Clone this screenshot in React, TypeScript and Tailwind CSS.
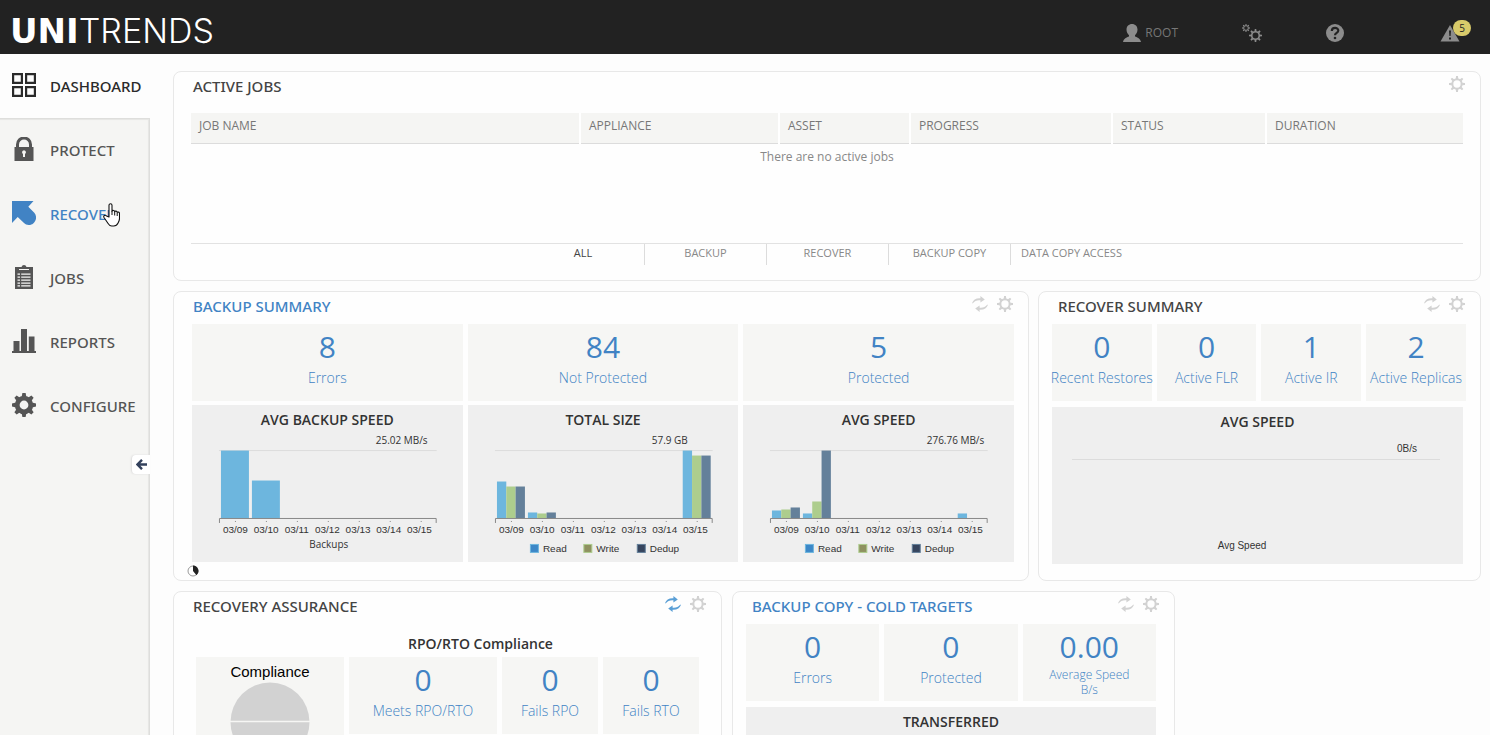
import { useState } from 'react';
import type { ReactNode } from 'react';

interface StatProps {
  value: string;
  label: string;
  unit?: string;
}

interface Series {
  name: string;
  color: string;
  keyColor: string;
  values: number[];
}

interface BarChartProps {
  title: string;
  peak: string;
  series: Series[];
  caption?: string;
}

interface PanelProps {
  title: string;
  linked?: boolean;
  refresh?: 'idle' | 'busy';
  className?: string;
  children: ReactNode;
}

const DAYS = ['03/09', '03/10', '03/11', '03/12', '03/13', '03/14', '03/15'];
const TEETH = [0, 45, 90, 135, 180, 225, 270, 315];

const JOB_COLUMNS = [
  { name: 'Job Name', width: 'w-auto' },
  { name: 'Appliance', width: 'w-[199px]' },
  { name: 'Asset', width: 'w-[131px]' },
  { name: 'Progress', width: 'w-[202px]' },
  { name: 'Status', width: 'w-[154px]' },
  { name: 'Duration', width: 'w-[197px]' },
];

const JOB_FILTERS = ['All', 'Backup', 'Recover', 'Backup Copy', 'Data Copy Access'];

const BACKUP_SPEED: Series[] = [
  { name: 'Backups', color: '#6db6de', keyColor: '#3c87c7', values: [68, 38, 0, 0, 0, 0, 0] },
];

const TOTAL_SIZE: Series[] = [
  { name: 'Read', color: '#6db6de', keyColor: '#3c87c7', values: [37, 6, 0, 0, 0, 0, 68] },
  { name: 'Write', color: '#adcd8d', keyColor: '#8e9160', values: [32, 5, 0, 0, 0, 0, 63] },
  { name: 'Dedup', color: '#64809a', keyColor: '#36455e', values: [32, 6, 0, 0, 0, 0, 63] },
];

const AVG_SPEED: Series[] = [
  { name: 'Read', color: '#6db6de', keyColor: '#3c87c7', values: [8, 5, 0, 0, 0, 0, 5] },
  { name: 'Write', color: '#adcd8d', keyColor: '#8e9160', values: [9, 17, 0, 0, 0, 0, 0] },
  { name: 'Dedup', color: '#64809a', keyColor: '#36455e', values: [11, 68, 0, 0, 0, 0, 0] },
];

function GearIcon({ className, bold = false }: { className: string; bold?: boolean }) {
  return (
    <svg viewBox="0 0 24 24" className={className} aria-hidden="true">
      <circle cx="12" cy="12" r={bold ? 6.8 : 7} fill="none" stroke="currentColor" strokeWidth={bold ? 4.8 : 3} />
      {TEETH.map((angle) => (
        <path
          key={angle}
          d={bold ? 'M9.6 4 10.4 0h3.2l.8 4z' : 'M10 4.4 10.600 0h2.800l.6 4.4z'}
          fill="currentColor"
          transform={`rotate(${angle} 12 12)`}
        />
      ))}
    </svg>
  );
}

function RefreshIcon({ className }: { className: string }) {
  return (
    <svg viewBox="0 0 16 16" className={className} aria-hidden="true" fill="currentColor">
      <path d="M0 7.2C1 3.9 4.2 1.9 8.4 2.2V0l4.400 3.500-4.400 3V4.300C5 4 2.600 4.900.9 7.300z" />
      <path d="M16 8.800c-1 3.300-4.200 5.300-8.400 5V16l-4.400-3.500 4.400-3v2.200c3.400.3 5.800-.6 7.500-3z" />
    </svg>
  );
}

function DashboardIcon() {
  return (
    <svg viewBox="0 0 24 24" className="size-6" fill="none" stroke="currentColor" strokeWidth="2.2" aria-hidden="true">
      <path d="M1.100 1.100h8.800v8.800H1.100zM14.100 1.100h8.800v8.800h-8.800zM1.100 14.100h8.800v8.800H1.100zM14.100 14.100h8.800v8.800h-8.800z" />
    </svg>
  );
}

function LockIcon() {
  return (
    <svg viewBox="0 0 24 24" className="size-6" fill="currentColor" aria-hidden="true">
      <path d="M5.500 11V7.500a6.500 6.500 0 0 1 13 0V11" fill="none" stroke="currentColor" strokeWidth="3" />
      <path
        fillRule="evenodd"
        d="M2.500 10h19v14h-19zM12 13.200a2 2 0 0 0-1 3.700V20h2v-3.100a2 2 0 0 0-1-3.700z"
      />
    </svg>
  );
}

function RecoverIcon() {
  return (
    <svg viewBox="0 0 24 24" className="size-6" fill="currentColor" aria-hidden="true">
      <path d="M0 0h21.500l-5.200 5.700 6 6.100c3.200 3.800 1.600 8.400-1.100 10.700-3 2.400-7 1.700-9.200-.5l-6.300-5.900L0 22z" />
    </svg>
  );
}

function JobsIcon() {
  return (
    <svg viewBox="0 0 24 24" className="size-6" aria-hidden="true">
      <path d="M3 2h4v3h10V2h4v22H3z" fill="currentColor" />
      <path d="M7 4V2h2.500a2.600 2.600 0 0 1 5 0H17v2z" fill="currentColor" />
      <path
        d="M5.500 9.200H8M9.200 9.200h9.300M5.500 12.200H8M9.200 12.200h9.300M5.500 15.200H8M9.200 15.200h9.300M5.500 18.200H8M9.200 18.200h9.300M5.500 20.800H8M9.200 20.800h9.300"
        stroke="#f5f5f3"
        strokeWidth="1.300"
      />
    </svg>
  );
}

function ReportsIcon() {
  return (
    <svg viewBox="0 0 24 24" className="size-6" fill="currentColor" aria-hidden="true">
      <path d="M0 22h24v2H0zM1.500 12h6v10h-6zM9 0h6v22H9zM16.800 7.500h5.700V22h-5.700z" />
    </svg>
  );
}

function HandCursor() {
  return (
    <svg
      viewBox="0 0 17 24"
      className="pointer-events-none absolute top-5 left-[103px] z-10 h-6 w-[17px]"
      aria-hidden="true"
    >
      <path
        d="M6 14V2.200C6 .3 9 .3 9 2.200v6c.3-1.200 2.700-1 2.700.6.400-1.200 2.500-.8 2.500.8.500-1 2.300-.6 2.300 1v4.900c0 2-.9 3.400-1.600 4.800-.7 1.600-2.100 2.700-4.100 2.700H8.700c-1.700 0-2.700-1-3.600-2.500L1 14.500c-1-1.700 1-3 2.500-1.600z"
        fill="#fff"
        stroke="#111"
        strokeWidth="1.100"
        strokeLinejoin="round"
      />
      <path d="M9 8v4M11.700 9v3.500M14.200 10v3" stroke="#111" strokeWidth="1" />
    </svg>
  );
}

function Stat({ value, label, unit }: StatProps) {
  return (
    <a
      href="#"
      className="flex h-[77px] flex-col items-center bg-[#f6f6f4] pt-[3px] text-center text-[#4183c4] hover:bg-[#efefec]"
    >
      <span className="text-[30px] leading-10">{value}</span>
      {unit ? (
        <span className="text-[12px] leading-[15px] font-light">
          {label}
          <br />
          {unit}
        </span>
      ) : (
        <span className="pt-px text-[14px] leading-5 font-light whitespace-nowrap">{label}</span>
      )}
    </a>
  );
}

function ChartTitle({ children }: { children: ReactNode }) {
  return <h3 className="pt-1 text-center text-[14px] leading-[22px] font-semibold text-[#333] uppercase">{children}</h3>;
}

function BarChart({ title, peak, series, caption }: BarChartProps) {
  const slot = 31;
  const barWidth = 28 / series.length;

  return (
    <div className="bg-[#efefef]">
      <ChartTitle>{title}</ChartTitle>
      <svg
        viewBox="0 -4 271 131"
        className="block h-[131px] w-full fill-[#333] font-['Liberation_Sans',sans-serif] text-[10px]"
        role="img"
        aria-label={title}
      >
        <text x="184" y="9" className="font-['Open_Sans',sans-serif]">
          {peak}
        </text>
        <path d="M27 15.500h218" stroke="#dcdcdc" />
        {series.map((item, s) =>
          item.values.map((height, day) =>
            height > 0 ? (
              <rect
                key={`${item.name}-${DAYS[day]}`}
                x={29 + day * slot + s * barWidth}
                y={83.5 - height}
                width={barWidth}
                height={height}
                fill={item.color}
              />
            ) : null,
          ),
        )}
        <path d="M27.500 88v-4.500h217V88" fill="none" stroke="#888" />
        {DAYS.map((day, i) => (
          <g key={day}>
            <path d={`M${43.5 + i * slot} 86v1`} stroke="#888" />
            <text x={43.5 + i * 30.7} y="98" textAnchor="middle">
              {day}
            </text>
          </g>
        ))}
        {caption ? (
          <text x="137" y="113" textAnchor="middle" className="font-['Open_Sans',sans-serif]">
            {caption}
          </text>
        ) : (
          series.map((item, s) => (
            <g key={item.name}>
              <rect
                x={62.5 + s * 53.5}
                y="109.500"
                width="8"
                height="8"
                fill={item.keyColor}
                stroke={item.color}
                strokeWidth="1"
              />
              <text x={75 + s * 53.5} y="117">
                {item.name}
              </text>
            </g>
          ))
        )}
      </svg>
    </div>
  );
}

function Panel({ title, linked = false, refresh, className = '', children }: PanelProps) {
  return (
    <section className={`rounded-lg border border-[#e8e8e8] bg-[#fefefe] ${className}`}>
      <header className="flex h-8 items-start justify-between pr-[15px] pl-[19px]">
        <h2
          className={`pt-1 font-['Noto_Sans',sans-serif] text-[15px] leading-5 font-medium uppercase ${
            linked ? 'text-[#4183c4]' : 'text-[#444]'
          }`}
        >
          {linked ? <a href="#">{title}</a> : title}
        </h2>
        <div className="flex gap-[9px] pt-1 text-[#d2d2d2]">
          {refresh && (
            <button type="button" aria-label={`Refresh ${title}`}>
              <RefreshIcon className={refresh === 'busy' ? 'size-4 text-[#5a9fd6]' : 'size-4'} />
            </button>
          )}
          <button type="button" aria-label={`${title} settings`}>
            <GearIcon className="size-4" />
          </button>
        </div>
      </header>
      {children}
    </section>
  );
}

function TopBar() {
  return (
    <header className="flex h-[54px] shrink-0 items-center justify-between bg-[#222] pr-5 pl-2.5 text-[#8c8c8c]">
      <a href="#" className="flex items-baseline pt-2 text-[34px] leading-10 text-white">
        <span className="font-['DejaVu_Sans',sans-serif] font-bold">UNI</span>
        <span className="font-[Inter,sans-serif] font-light">TRENDS</span>
      </a>
      <nav className="flex items-center gap-16 pt-3">
        <button type="button" className="flex items-center gap-1 text-[12px] leading-5 text-[#777]">
          <svg viewBox="0 0 18 18" className="size-[18px] text-[#8c8c8c]" fill="currentColor" aria-hidden="true">
            <path d="M9 0c3.200 0 5.500 2.200 5.500 5.600 0 2.300-1 4.500-2.500 5.600v1.300c2.500.8 5.200 1.900 6 5.500H0c.8-3.600 3.500-4.700 6-5.500v-1.300C4.500 10.100 3.500 7.900 3.500 5.600 3.500 2.200 5.800 0 9 0z" />
          </svg>
          ROOT
        </button>
        <button type="button" aria-label="Settings" className="flex items-end">
          <GearIcon className="mb-2.5 size-2" />
          <GearIcon className="-ml-px size-[13px]" />
        </button>
        <button type="button" aria-label="Help">
          <svg viewBox="0 0 18 18" className="size-[18px]" aria-hidden="true">
            <circle cx="9" cy="9" r="9" fill="currentColor" />
            <path
              d="M5.800 7c0-4 6.500-4 6.500-.4C12.300 9 9 8.800 9 11.300"
              fill="none"
              stroke="#222"
              strokeWidth="2.200"
            />
            <circle cx="9" cy="14" r="1.300" fill="#222" />
          </svg>
        </button>
        <button type="button" aria-label="5 alerts" className="relative ml-8 w-[30px]">
          <svg viewBox="0 0 20 18" className="h-[18px] w-5" aria-hidden="true">
            <path d="M10 1 19.500 17.500H.5z" fill="currentColor" />
            <path d="M9 6.500h2l-.4 5.500H9.400zM9 13.500h2v2H9z" fill="#222" />
          </svg>
          <span className="absolute -top-1 left-[13px] h-4 w-[18px] rounded-full bg-[#d8ca6a] text-[10px] leading-4 text-[#222]">
            5
          </span>
        </button>
      </nav>
    </header>
  );
}

const NAV_ITEMS = [
  { name: 'Protect', icon: <LockIcon /> },
  { name: 'Recover', icon: <RecoverIcon /> },
  { name: 'Jobs', icon: <JobsIcon /> },
  { name: 'Reports', icon: <ReportsIcon /> },
  { name: 'Configure', icon: <GearIcon bold className="size-6" /> },
];

function Sidebar() {
  return (
    <nav className="relative flex w-[150px] shrink-0 flex-col font-['Noto_Sans',sans-serif] text-[15px] leading-5 font-medium text-[#555] uppercase">
      <a href="#" aria-current="page" className="flex h-16 items-center gap-3.5 pb-0.5 pl-3 text-[#2a2a2a]">
        <DashboardIcon />
        <span className="pt-0.5">Dashboard</span>
      </a>
      <div className="grow border-t border-r border-[#dededc] bg-[#f5f5f3] shadow-[inset_-1px_1px_1px_#e6e6e4]">
        {NAV_ITEMS.map((item) => (
          <a
            key={item.name}
            href="#"
            className={`relative flex h-16 items-center gap-3.5 pb-1 pl-3 ${item.name === 'Recover' ? 'text-[#4183c4]' : ''}`}
          >
            {item.icon}
            <span className="pt-0.5">{item.name}</span>
            {item.name === 'Recover' && <HandCursor />}
          </a>
        ))}
      </div>
      <button
        type="button"
        aria-label="Collapse menu"
        className="absolute top-[401px] right-0 flex h-[19px] w-[18px] items-center justify-center rounded-l bg-white shadow-[-1px_0_2px_#ddd]"
      >
        <svg viewBox="0 0 11 11" className="size-[11px]" fill="none" stroke="#33415c" strokeWidth="2.400" aria-hidden="true">
          <path d="M6 .8 1.500 5.500 6 10.200M2 5.500h9" />
        </svg>
      </button>
    </nav>
  );
}

function ActiveJobs() {
  const [filter, setFilter] = useState('All');

  return (
    <Panel title="Active Jobs" className="h-[210px] shrink-0">
      <div className="flex h-[169px] flex-col px-[17px] pt-[9px]">
        <table className="w-full table-fixed text-[12px] leading-4">
          <thead>
            <tr>
              {JOB_COLUMNS.map((column) => (
                <th
                  key={column.name}
                  className={`${column.width} h-[30px] border-b border-l-2 border-b-[#dcdcdc] border-l-white bg-[#f5f5f3] pb-1 pl-2 text-left font-normal text-[#777] uppercase first:border-l-0`}
                >
                  {column.name}
                </th>
              ))}
            </tr>
          </thead>
          <tbody>
            <tr>
              <td colSpan={6} className="h-7 text-center text-[#888]">
                There are no active jobs
              </td>
            </tr>
          </tbody>
        </table>
        <div className="mt-auto flex h-[30px] justify-center border-t border-[#e2e2e2]">
          {JOB_FILTERS.map((name) => (
            <button
              key={name}
              type="button"
              onClick={() => setFilter(name)}
              className={`h-[21px] w-[122px] border-l border-[#dcdcdc] pb-1 text-[11px] leading-4 whitespace-nowrap uppercase first:border-l-0 ${
                filter === name ? 'text-[#444]' : 'text-[#888]'
              }`}
            >
              {name}
            </button>
          ))}
        </div>
      </div>
    </Panel>
  );
}

export default function App() {
  return (
    <div className="flex h-screen flex-col overflow-hidden bg-[#fdfdfd] font-['Open_Sans','Noto_Sans',sans-serif]">
      <TopBar />
      <div className="flex min-h-0 grow">
        <Sidebar />
        <main className="flex min-w-0 grow flex-col gap-2.5 overflow-hidden pt-[17px] pr-[9px] pl-[23px]">
          <ActiveJobs />

          <div className="grid shrink-0 grid-cols-[856fr_443fr] gap-[9px]">
            <Panel title="Backup Summary" linked refresh="idle" className="h-[290px]">
              <div className="grid grid-cols-3 gap-x-[5px] gap-y-1 pr-3.5 pl-[18px]">
                <Stat value="8" label="Errors" />
                <Stat value="84" label="Not Protected" />
                <Stat value="5" label="Protected" />
                <BarChart title="Avg Backup Speed" peak="25.02 MB/s" series={BACKUP_SPEED} caption="Backups" />
                <BarChart title="Total Size" peak="57.9 GB" series={TOTAL_SIZE} />
                <BarChart title="Avg Speed" peak="276.76 MB/s" series={AVG_SPEED} />
              </div>
              <svg viewBox="0 0 12 12" className="mt-[3px] ml-[13px] size-3" aria-hidden="true">
                <circle cx="6" cy="6" r="5" fill="#fff" stroke="#999" />
                <path d="M6 6V.5A5.500 5.500 0 0 1 9.500 10.200z" fill="#222" />
              </svg>
            </Panel>

            <Panel title="Recover Summary" refresh="idle" className="h-[290px]">
              <div className="grid grid-cols-4 gap-[5px] pr-3.5 pl-[13px]">
                <Stat value="0" label="Recent Restores" />
                <Stat value="0" label="Active FLR" />
                <Stat value="1" label="Active IR" />
                <Stat value="2" label="Active Replicas" />
              </div>
              <div className="mt-1.5 mr-[17px] ml-[13px] bg-[#efefef]">
                <ChartTitle>Avg Speed</ChartTitle>
                <svg
                  viewBox="0 -4 411 131"
                  className="block h-[131px] w-full fill-[#333] font-['Liberation_Sans',sans-serif] text-[10px]"
                  role="img"
                  aria-label="Average recovery speed"
                >
                  <text x="345" y="15">
                    0B/s
                  </text>
                  <path d="M20 22.500h368" stroke="#dcdcdc" />
                  <text x="190" y="112" textAnchor="middle">
                    Avg Speed
                  </text>
                </svg>
              </div>
            </Panel>
          </div>

          <div className="grid shrink-0 grid-cols-[549fr_443fr_296fr] gap-2.5">
            <Panel title="Recovery Assurance" refresh="busy">
              <h3 className="pt-2.5 pb-[3px] pl-[66px] text-center text-[14px] leading-5 font-semibold text-[#333]">
                RPO/RTO Compliance
              </h3>
              <div className="grid grid-cols-[148fr_148fr_96fr_96fr] gap-[5px] px-[22px]">
                <div className="flex h-40 flex-col items-center bg-[#f6f6f4] pt-[5px] font-['Liberation_Sans',sans-serif] text-[15px] leading-5 text-black">
                  Compliance
                  <svg viewBox="0 0 80 80" className="size-20" aria-hidden="true">
                    <circle cx="40" cy="40" r="39.500" fill="#d2d2d2" />
                    <path d="M0 39.500h80" stroke="#f6f6f4" strokeWidth="1.500" />
                  </svg>
                </div>
                <Stat value="0" label="Meets RPO/RTO" />
                <Stat value="0" label="Fails RPO" />
                <Stat value="0" label="Fails RTO" />
              </div>
            </Panel>

            <Panel title="Backup Copy - Cold Targets" linked refresh="idle">
              <div className="grid grid-cols-3 gap-[5px] pr-[18px] pl-[13px]">
                <Stat value="0" label="Errors" />
                <Stat value="0" label="Protected" />
                <Stat value="0.00" label="Average Speed" unit="B/s" />
              </div>
              <div className="mt-1.5 mr-[18px] ml-[13px] h-[157px] bg-[#efefef]">
                <ChartTitle>Transferred</ChartTitle>
              </div>
            </Panel>
          </div>
        </main>
      </div>
    </div>
  );
}
